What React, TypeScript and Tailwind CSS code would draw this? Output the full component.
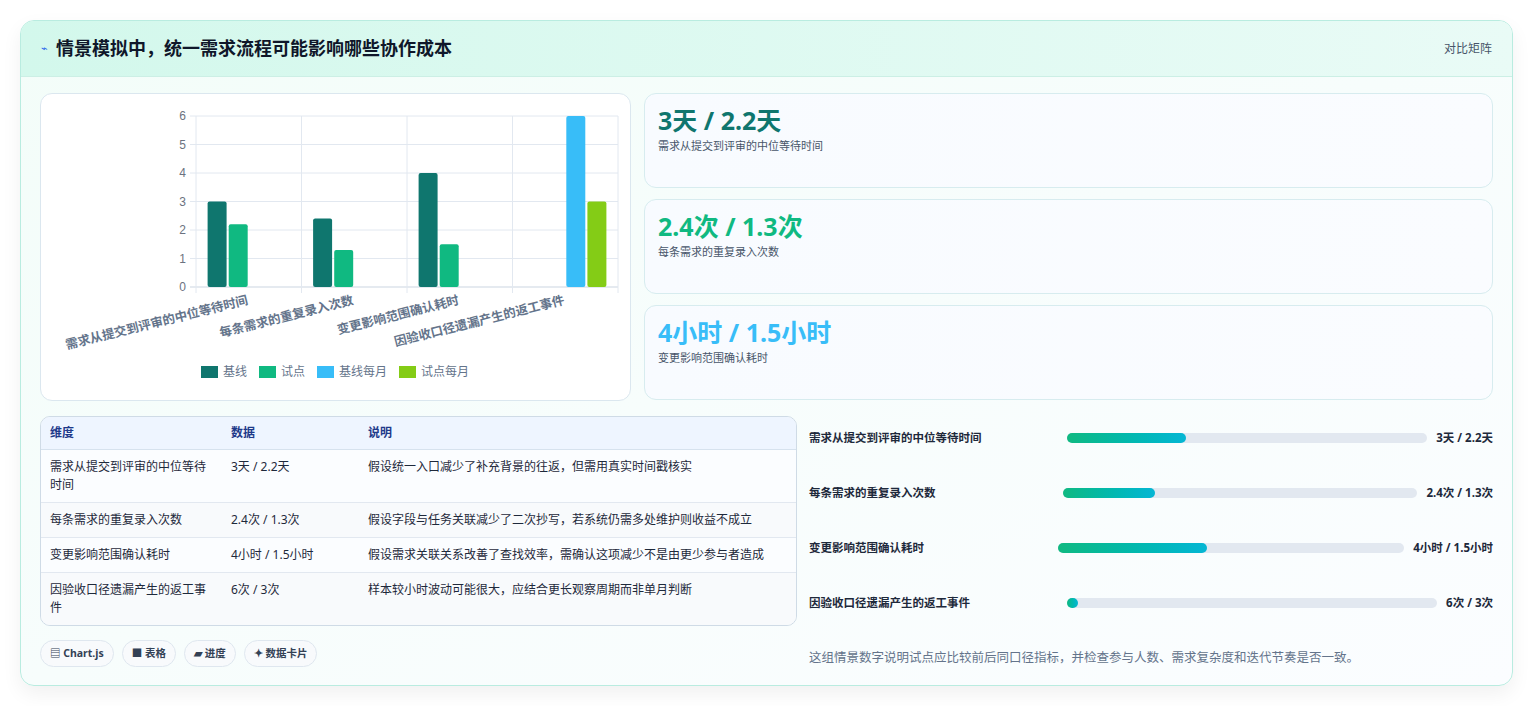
import React from "react";

const cats = ["需求从提交到评审的中位等待时间", "每条需求的重复录入次数", "变更影响范围确认耗时", "因验收口径遗漏产生的返工事件"];
const data: [number, number, string, string][] = [
  [3, 2.2, "#0f766e", "#10b981"],
  [2.4, 1.3, "#0f766e", "#10b981"],
  [4, 1.5, "#0f766e", "#10b981"],
  [6, 3, "#38bdf8", "#84cc16"],
];

function Chart() {
  const x0 = 155, zero = 193, unit = 28.5, cw = 105.5, right = 577;
  return (
    <svg width="590" height="305" className="block">
      {[0, 1, 2, 3, 4, 5, 6].map((v) => (
        <g key={v}>
          <line x1={x0 - 6} x2={right} y1={zero - v * unit} y2={zero - v * unit} stroke={v === 0 ? "#cbd5e1" : "#e2e8f0"} />
          <text x={x0 - 10} y={zero - v * unit + 4} textAnchor="end" fontSize="12" fill="#6b7280" fontFamily="Liberation Sans, sans-serif">{v}</text>
        </g>
      ))}
      {[0, 1, 2, 3, 4].map((i) => (
        <line key={i} x1={x0 + i * cw} x2={x0 + i * cw} y1={zero - 6 * unit} y2={zero + 6} stroke="#e2e8f0" />
      ))}
      {data.map((d, i) => {
        const slotStart = x0 + i * cw + cw * 0.1;
        const sw = (cw * 0.8) / 4;
        const off = i === 3 ? 2 : 0;
        return (
          <g key={i}>
            {[d[0], d[1]].map((v, j) => (
              <rect key={j} x={slotStart + (off + j) * sw + sw * 0.05} y={zero - v * unit} width={sw * 0.9} height={v * unit} rx="2" fill={j === 0 ? d[2] : d[3]} />
            ))}
            <text transform={`translate(${x0 + i * cw + cw / 2} ${zero + 17}) rotate(-14)`} textAnchor="end" fontSize="12.5" fontWeight="600" fill="#64748b" fontFamily="'Noto Sans CJK SC', sans-serif">{cats[i]}</text>
          </g>
        );
      })}
      {[["基线", "#0f766e", 160], ["试点", "#10b981", 218], ["基线每月", "#38bdf8", 276], ["试点每月", "#84cc16", 358]].map(([t, c, x]) => (
        <g key={t as string}>
          <rect x={x as number} y={272} width={17} height={12} fill={c as string} />
          <text x={(x as number) + 22} y={282} fontSize="12" fill="#64748b" fontFamily="'Noto Sans CJK SC', sans-serif">{t}</text>
        </g>
      ))}
    </svg>
  );
}

const rows = [
  ["需求从提交到评审的中位等待时间", "3天 / 2.2天", "假设统一入口减少了补充背景的往返，但需用真实时间戳核实"],
  ["每条需求的重复录入次数", "2.4次 / 1.3次", "假设字段与任务关联减少了二次抄写，若系统仍需多处维护则收益不成立"],
  ["变更影响范围确认耗时", "4小时 / 1.5小时", "假设需求关联关系改善了查找效率，需确认这项减少不是由更少参与者造成"],
  ["因验收口径遗漏产生的返工事件", "6次 / 3次", "样本较小时波动可能很大，应结合更长观察周期而非单月判断"],
];

const bars = [
  ["需求从提交到评审的中位等待时间", "3天 / 2.2天", 33, 258],
  ["每条需求的重复录入次数", "2.4次 / 1.3次", 26, 254],
  ["变更影响范围确认耗时", "4小时 / 1.5小时", 43, 249],
  ["因验收口径遗漏产生的返工事件", "6次 / 3次", 3, 258],
];

export default function App() {
  return (
    <div className="min-h-[706px] bg-white p-[20px] pb-0" style={{ fontFamily: "'Noto Sans', 'Noto Sans CJK SC', sans-serif" }}>
      <div className="w-[1493px] h-[666px] rounded-[14px] border border-[#b9ece0] bg-gradient-to-br from-[#f3fdf9] to-[#fbfdff] shadow-[0_8px_20px_rgba(0,0,0,0.06)] overflow-hidden flex flex-col">
        <div className="h-[56px] shrink-0 flex items-center justify-between px-[20px] bg-gradient-to-r from-[#d3f8ec] to-[#e9fbf6] border-b border-[#ccefe5]">
          <div className="flex items-center gap-[8px]">
            <span className="text-[11px] text-[#2563eb]">⌁</span>
            <span className="text-[18px] font-bold text-[#0f172a]">情景模拟中，统一需求流程可能影响哪些协作成本</span>
          </div>
          <span className="text-[12px] text-[#475569]">对比矩阵</span>
        </div>
        <div className="px-[19px] pt-[16px] flex flex-col gap-[15px]">
          <div className="flex gap-[13px]">
            <div className="w-[591px] h-[308px] bg-white rounded-[12px] border border-[#dbe7ef] overflow-hidden">
              <Chart />
            </div>
            <div className="flex-1 flex flex-col gap-[11px]">
              {[["3天 / 2.2天", "#0f766e", "需求从提交到评审的中位等待时间"], ["2.4次 / 1.3次", "#10b981", "每条需求的重复录入次数"], ["4小时 / 1.5小时", "#38bdf8", "变更影响范围确认耗时"]].map(([v, c, l]) => (
                <div key={l} className="h-[95px] rounded-[12px] border border-[#d7ecef] bg-gradient-to-r from-[#f8fbff] to-[#fafcff] px-[13px] pt-[10px]">
                  <div className="text-[25px] font-bold leading-[32px]" style={{ color: c }}>{v}</div>
                  <div className="text-[11px] text-[#475569] mt-[2px]">{l}</div>
                </div>
              ))}
            </div>
          </div>
          <div className="flex gap-[12px]">
            <div className="w-[757px] flex flex-col gap-[14px]">
              <div className="rounded-[10px] border border-[#cfdbe6] overflow-hidden bg-[#f8fafc] text-[12px]">
                <div className="flex h-[33px] items-center bg-[#eef5ff] border-b border-[#d6e2ee] font-bold text-[#1e3a8a]">
                  <div className="w-[182px] pl-[9px]">维度</div>
                  <div className="w-[137px] pl-[8px]">数据</div>
                  <div className="flex-1 pl-[8px]">说明</div>
                </div>
                {rows.map((r, i) => (
                  <div key={i} className={`flex py-[8px] text-[#1e293b] leading-[18px] ${i < 3 ? "border-b border-[#e2e8f0]" : ""} ${i % 2 ? "bg-[#f8fafc]" : "bg-[#fbfdff]"}`}>
                    <div className="w-[182px] pl-[9px] pr-[6px]">{r[0]}</div>
                    <div className="w-[137px] pl-[8px]">{r[1]}</div>
                    <div className="flex-1 pl-[8px]">{r[2]}</div>
                  </div>
                ))}
              </div>
              <div className="flex gap-[8px]">
                {["▤ Chart.js", "■ 表格", "▰ 进度", "✦ 数据卡片"].map((t) => (
                  <span key={t} className="h-[27px] px-[9px] flex items-center rounded-full border border-[#dfe7ef] bg-[#f8fafc] text-[10.5px] font-bold text-[#334155]">{t}</span>
                ))}
              </div>
            </div>
            <div className="flex-1 flex flex-col pt-[10px]">
              {bars.map(([l, v, p, w]) => (
                <div key={l as string} className="h-[55px] flex items-start text-[11.5px] font-bold text-[#1e293b]">
                  <div className="shrink-0 leading-[24px]" style={{ width: w as number }}>{l}</div>
                  <div className="flex-1 h-[10px] mt-[7px] rounded-full bg-[#e2e8f0]">
                    <div className="h-full rounded-full bg-gradient-to-r from-[#10b981] to-[#06b6d4]" style={{ width: `${Math.max(p as number, 3)}%` }} />
                  </div>
                  <div className="shrink-0 pl-[9px] leading-[24px]">{v}</div>
                </div>
              ))}
              <div className="text-[12.5px] text-[#64748b] mt-[3px]">这组情景数字说明试点应比较前后同口径指标，并检查参与人数、需求复杂度和迭代节奏是否一致。</div>
            </div>
          </div>
        </div>
      </div>
    </div>
  );
}
